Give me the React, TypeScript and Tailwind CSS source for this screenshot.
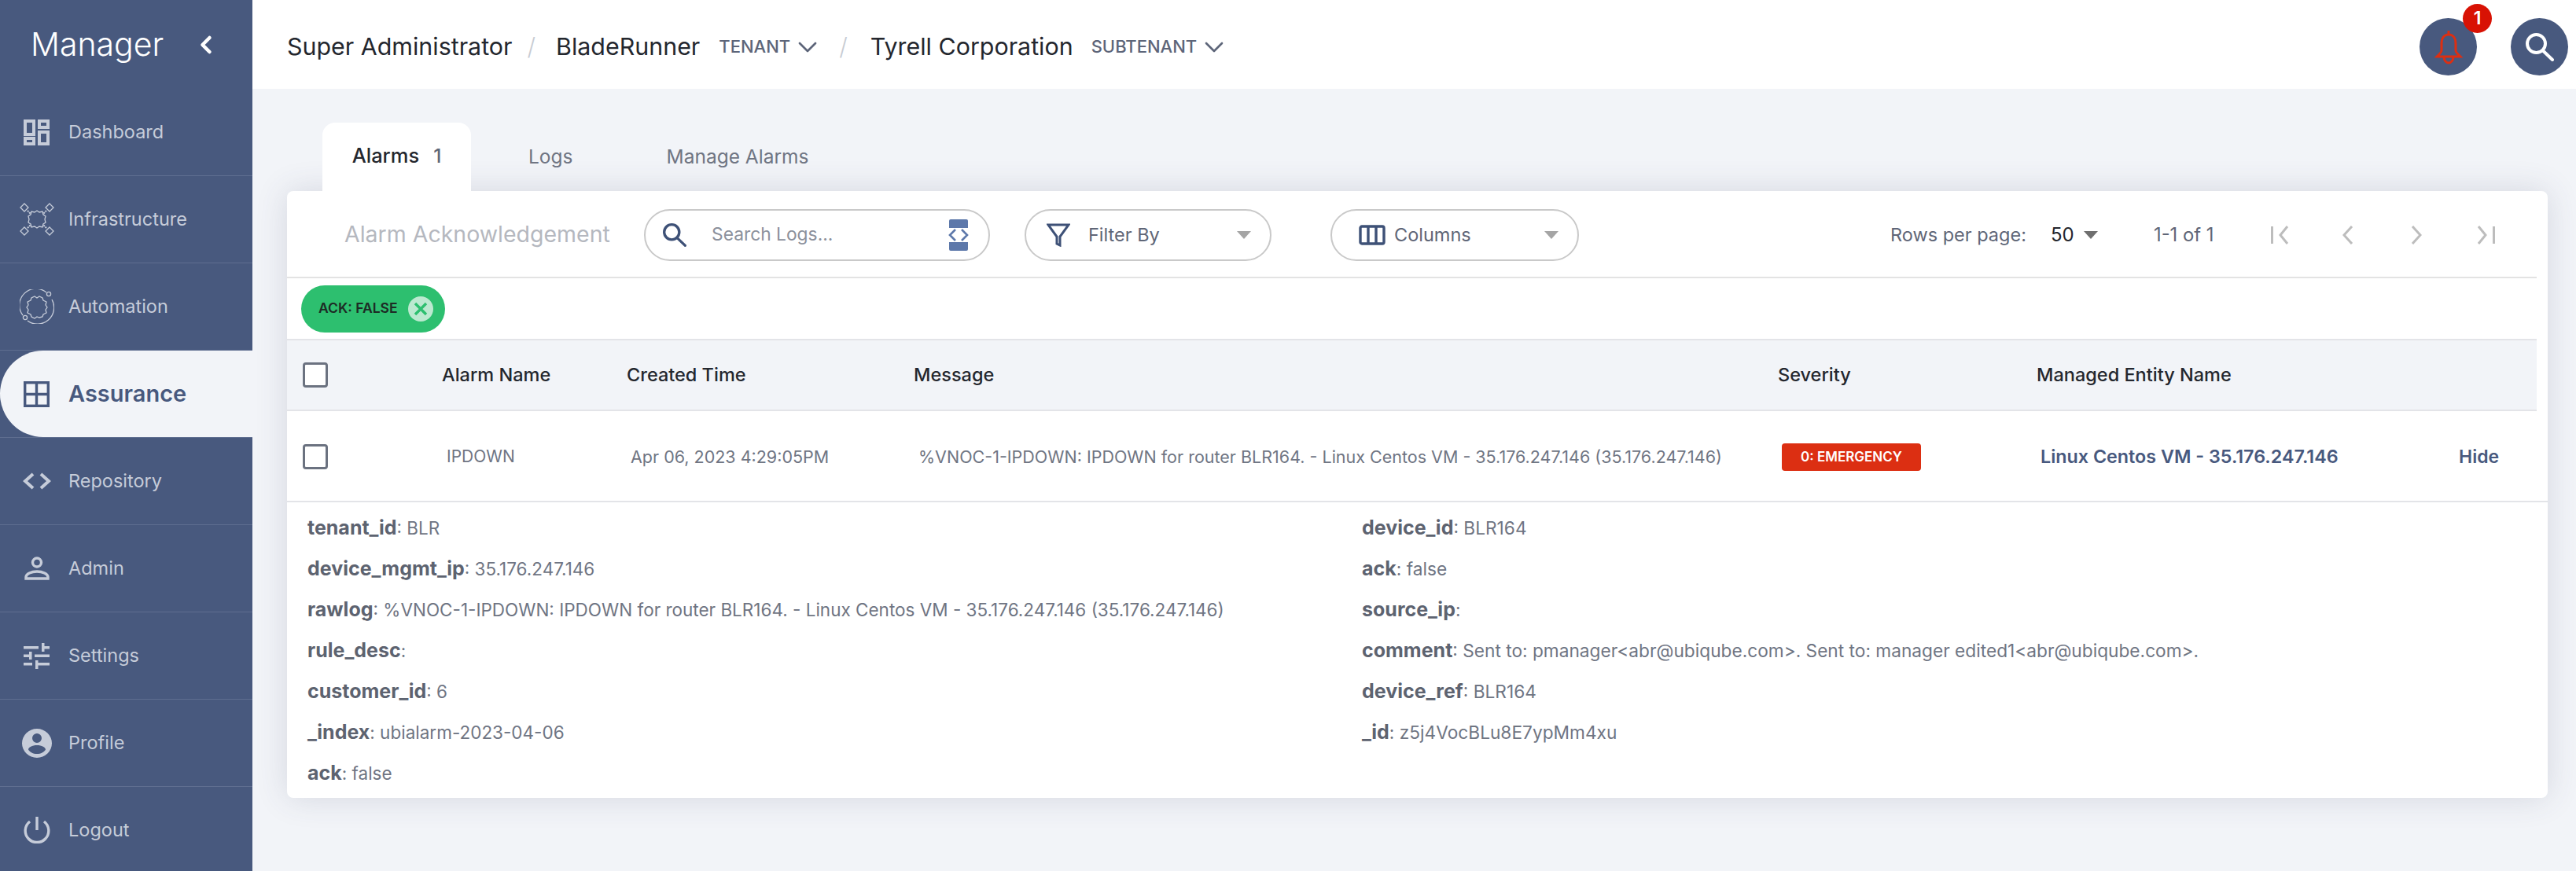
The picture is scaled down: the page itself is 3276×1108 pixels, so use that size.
import React from 'react';
import { ChevronDown, ChevronLeft } from 'lucide-react';

const DashboardIcon = () => (
  <svg className="w-[33px] h-[33px]" viewBox="0 0 33 33" fill="none" stroke="currentColor" strokeWidth="4">
    <rect x="2" y="2" width="11" height="17" />
    <rect x="20" y="2" width="11" height="8" />
    <rect x="2" y="24" width="11" height="7" />
    <rect x="20" y="16" width="11" height="15" />
  </svg>
);

const InfraIcon = () => (
  <svg className="w-[44px] h-[44px]" viewBox="0 0 44 44" fill="none" stroke="currentColor" strokeWidth="1.3">
    <path d="M6 2l5 5-5 5-5-5zM38 2l5 5-5 5-5-5zM6 32l5 5-5 5-5-5zM38 32l5 5-5 5-5-5z" />
    <path d="M10 11l4 4M34 11l-4 4M10 33l4-4M34 33l-4-4" strokeWidth="2" strokeDasharray="2 1" />
    <path d="M19 13l3-2 3 2 4-1 1 4 3 2-1 4 1 4-3 2-1 4-4-1-3 2-3-2-4 1-1-4-3-2 1-4-1-4 3-2 1-4z" />
  </svg>
);

const AutomationIcon = () => (
  <svg className="w-[44px] h-[44px]" viewBox="0 0 44 44" fill="none" stroke="currentColor" strokeWidth="1.3">
    <path d="M34 4A21 21 0 0 0 4 33" />
    <path d="M10 40A21 21 0 0 0 41 13" />
    <circle cx="37" cy="6" r="2.6" />
    <circle cx="7" cy="36" r="2.6" />
    <path d="M19 9l3 2 3-2 4 2 1 3 4 2-1 4 2 3-2 3 1 4-4 2-1 3-4 1-3-1-3 2-4-2-1-3-4-2 1-4-2-3 2-3-1-4 4-2 1-3z" />
  </svg>
);

const AssuranceIcon = () => (
  <svg className="w-[33px] h-[33px]" viewBox="0 0 33 33" fill="none" stroke="currentColor" strokeWidth="3.4">
    <rect x="1.7" y="1.7" width="29.6" height="29.6" />
    <path d="M16.5 2v29M2 16.5h29" />
  </svg>
);

const CodeIcon = () => (
  <svg className="w-[38px] h-[24px]" viewBox="0 0 38 24" fill="none" stroke="currentColor" strokeWidth="4">
    <path d="M14 3L4 12l10 9M24 3l10 9-10 9" />
  </svg>
);

const AdminIcon = () => (
  <svg className="w-[32px] h-[30px]" viewBox="0 0 32 30" fill="none" stroke="currentColor" strokeWidth="3.4">
    <circle cx="16" cy="7.5" r="5.5" />
    <path d="M2 28v-2c0-4 7-7 14-7s14 3 14 7v2z" />
  </svg>
);

const SettingsIcon = () => (
  <svg className="w-[33px] h-[33px]" viewBox="0 0 33 33" fill="currentColor">
    <path d="M0 4h19v3.500H0zM23 0h3.500v4H33v3.500h-6.500V11H23zM0 14.500h7V11h3.500v10H7v-3H0zM14 14.500h19V18H14zM0 25h11v3.500H0zM15 22h3.500v3H33v3.500H18.500V33H15z" />
  </svg>
);

const ProfileIcon = () => (
  <svg className="w-[38px] h-[37px]" viewBox="0 0 38 37" fill="currentColor">
    <path fillRule="evenodd" d="M19 0a19 18.500 0 1 1 0 37a19 18.500 0 0 1 0-37zM19 6a6 6 0 1 0 0 12a6 6 0 0 0 0-12zM19 21c-6 0-11 2.500-11 5.500C10 30 14 32 19 32s9-2 11-5.500C30 23.500 25 21 19 21z" />
  </svg>
);

const LogoutIcon = () => (
  <svg className="w-[34px] h-[34px]" viewBox="0 0 34 34" fill="none" stroke="currentColor" strokeWidth="3.4">
    <path d="M17 0v17" />
    <path d="M8 6a14.800 14.800 0 1 0 18 0" />
  </svg>
);

// lens up-left with a long handle, lucide's Search has too big a lens
const SearchIcon = ({ className, stroke }: { className: string; stroke: string }) => (
  <svg className={className} viewBox="0 0 36 36" fill="none" stroke={stroke} strokeWidth="4" strokeLinecap="round">
    <circle cx="13.500" cy="13.500" r="11.500" />
    <path d="M21.500 22L34 34" />
  </svg>
);

const navItems = [
  { label: 'Dashboard', icon: <DashboardIcon /> },
  { label: 'Infrastructure', icon: <InfraIcon /> },
  { label: 'Automation', icon: <AutomationIcon /> },
  { label: 'Assurance', icon: <AssuranceIcon />, active: true },
  { label: 'Repository', icon: <CodeIcon /> },
  { label: 'Admin', icon: <AdminIcon /> },
  { label: 'Settings', icon: <SettingsIcon /> },
  { label: 'Profile', icon: <ProfileIcon /> },
  { label: 'Logout', icon: <LogoutIcon /> },
];

const leftDetails = [
  ['tenant_id', 'BLR'],
  ['device_mgmt_ip', '35.176.247.146'],
  ['rawlog', '%VNOC-1-IPDOWN: IPDOWN for router BLR164. - Linux Centos VM - 35.176.247.146 (35.176.247.146)'],
  ['rule_desc', ''],
  ['customer_id', '6'],
  ['_index', 'ubialarm-2023-04-06'],
  ['ack', 'false'],
];

const rightDetails = [
  ['device_id', 'BLR164'],
  ['ack', 'false'],
  ['source_ip', ''],
  ['comment', 'Sent to: pmanager<abr@ubiqube.com>. Sent to: manager edited1<abr@ubiqube.com>.'],
  ['device_ref', 'BLR164'],
  ['_id', 'z5j4VocBLu8E7ypMm4xu'],
];

const Sidebar = () => (
  <aside className="w-[321px] shrink-0 bg-[#48597e] h-[1108px] overflow-hidden">
    <div className="h-[113px] flex items-center pl-[39px] text-white">
      <span className="text-[41px] font-light w-[205px]">Manager</span>
      <ChevronLeft className="w-[36px] h-[36px]" strokeWidth={3} />
    </div>
    {navItems.map(item => (
      <div key={item.label} className="h-[111px] border-b border-[#5f6e90]">
        <div className={item.active ? 'h-full flex items-center bg-[#f2f4f8] rounded-l-[55px] text-[#48597e] font-semibold text-[29px]' : 'h-full flex items-center text-[#c6ccd9] text-[23.5px]'}>
          <div className="w-[87px] pl-[6px] flex justify-center shrink-0">{item.icon}</div>
          <span>{item.label}</span>
        </div>
      </div>
    ))}
  </aside>
);

const Header = () => (
  <header className="h-[113px] bg-white flex items-center pt-[6px] pl-[44px] pr-[10px] text-[30.400px] text-[#24272e]">
    <span>Super Administrator</span>
    <span className="ml-[19px] text-[#c8ccd3] font-light">/</span>
    <span className="ml-[26px]">BladeRunner</span>
    <span className="ml-[24px] text-[22px] font-medium text-[#5d6579]">TENANT</span>
    <ChevronDown className="ml-[2px] w-[40px] h-[40px] text-[#5d6579]" strokeWidth={1.600} />
    <span className="ml-[20px] text-[#c8ccd3] font-light">/</span>
    <span className="ml-[29px]">Tyrell Corporation</span>
    <span className="ml-[23px] text-[22px] font-medium text-[#5d6579]">SUBTENANT</span>
    <ChevronDown className="ml-[2px] w-[40px] h-[40px] text-[#5d6579]" strokeWidth={1.600} />
    <div className="ml-auto relative w-[73px] h-[73px] rounded-full bg-[#48597e] flex items-center justify-center">
      <svg className="w-[36px] h-[44px]" viewBox="0 0 36 44" fill="none" stroke="#dc2f12" strokeWidth="3">
        <path d="M18 1v5M18 6c-6 0-9 5-9 11v9c0 3-3 5-6 8h30c-3-3-6-5-6-8v-9c0-6-3-11-9-11zM12 34c0 5 3 8 6 8s6-3 6-8" />
      </svg>
      <span className="absolute -top-[18px] -right-[19px] w-[37px] h-[37px] rounded-full bg-[#d81204] text-white text-[23px] font-semibold flex items-center justify-center">1</span>
    </div>
    <div className="ml-[43px] w-[73px] h-[73px] rounded-full bg-[#48597e] flex items-center justify-center">
      <SearchIcon className="w-[36px] h-[36px]" stroke="white" />
    </div>
  </header>
);

const SelectBox = ({ width, icon, label }: { width: string; icon: React.ReactNode; label: string }) => (
  <div className={`${width} h-[66px] rounded-[33px] border-2 border-[#c9c9c9] flex items-center pl-[26px] pr-[24px] text-[23.500px] text-[#5f6677]`}>
    {icon}
    <span className="ml-[23px]">{label}</span>
    <span className="ml-auto w-0 h-0 border-l-[9px] border-r-[9px] border-t-[10px] border-l-transparent border-r-transparent border-t-[#a5a5a5]" />
  </div>
);

const Toolbar = () => (
  <div className="h-[111px] pt-[2px] mr-[14px] border-b-2 border-[#e3e3e3] flex items-center pl-[73px]">
    <span className="w-[338px] text-[28.500px] text-[#b5b8bf] whitespace-nowrap">Alarm Acknowledgement</span>
    <div className="ml-[43px] w-[440px] h-[66px] rounded-[33px] border-2 border-[#c9c9c9] flex items-center pl-[22px] pr-[24px]">
      <SearchIcon className="w-[30px] h-[30px]" stroke="#3e5177" />
      <span className="ml-[32px] text-[22.800px] text-[#8c919c]">Search Logs...</span>
      <svg className="ml-auto w-[28px] h-[42px]" viewBox="0 0 28 42" fill="none">
        <path d="M2 12V3a2 2 0 0 1 2-2h20a2 2 0 0 1 2 2v9zM2 30v9a2 2 0 0 0 2 2h20a2 2 0 0 0 2-2v-9z" fill="#5d78aa" />
        <path d="M10 14l-7 7 7 7M18 14l7 7-7 7" stroke="#5d78aa" strokeWidth="2.6" />
      </svg>
    </div>
    <div className="ml-[44px]">
      <SelectBox
        width="w-[314px]"
        label="Filter By"
        icon={
          <svg className="w-[30px] h-[30px]" viewBox="0 0 30 30" fill="none" stroke="#3e5177" strokeWidth="3">
            <path d="M2 2h26L17 17v11l-4-2V17z" />
          </svg>
        }
      />
    </div>
    <div className="ml-[75px]">
      <SelectBox
        width="w-[316px]"
        label="Columns"
        icon={
          <svg className="ml-[8px] w-[34px] h-[26px] -mr-[12px]" viewBox="0 0 34 26" fill="none" stroke="#3e5177" strokeWidth="3.4">
            <rect x="2" y="2" width="30" height="22" rx="2" />
            <path d="M12 2v22M22 2v22" />
          </svg>
        }
      />
    </div>
    <span className="ml-[396px] w-[173px] text-[23.500px] text-[#5f6677] whitespace-nowrap">Rows per page:</span>
    <span className="ml-[31px] w-[29px] text-[24px] text-[#24272e]">50</span>
    <span className="ml-[13px] w-0 h-0 border-l-[9px] border-r-[9px] border-t-[10px] border-l-transparent border-r-transparent border-t-[#6f6f6f]" />
    <span className="ml-[71px] w-[80px] text-[23.800px] text-[#5f6677] whitespace-nowrap">1-1 of 1</span>
    <div className="ml-[69px] flex items-center">
      <svg className="w-[23px] h-[24px]" viewBox="0 0 23 24" fill="none" stroke="#bdbdbd" strokeWidth="3"><path d="M1.500 1v22M21 1l-9 11 9 11" /></svg>
      <svg className="ml-[68px] w-[14px] h-[24px]" viewBox="0 0 14 24" fill="none" stroke="#bdbdbd" strokeWidth="3"><path d="M12 1L2 12l10 11" /></svg>
      <svg className="ml-[73px] w-[14px] h-[24px]" viewBox="0 0 14 24" fill="none" stroke="#bdbdbd" strokeWidth="3"><path d="M2 1l10 11L2 23" /></svg>
      <svg className="ml-[70px] w-[23px] h-[24px]" viewBox="0 0 23 24" fill="none" stroke="#bdbdbd" strokeWidth="3"><path d="M21.500 1v22M2 1l9 11-9 11" /></svg>
    </div>
  </div>
);

const Checkbox = () => <div className="w-[32px] h-[32px] rounded-[4px] border-[3px] border-[#6b7280] bg-white" />;

const DetailRow = ({ name, value }: { name: string; value: string }) => (
  <div className="h-[52px] flex items-center whitespace-pre">
    <span className="font-bold text-[25px] text-[#5d6370]">{name}</span>
    <span>: {value}</span>
  </div>
);

const App = () => (
  <div className="flex w-[3276px] h-[1108px] overflow-hidden bg-[#f2f4f8] font-['Inter',sans-serif]">
    <Sidebar />
    <div className="flex-1 min-w-0">
      <Header />
      <main className="pl-[44px] pr-[36px] pt-[43px]">
        <div className="flex h-[87px] ml-[45px] text-[24.500px] text-[#6f7583]">
          <div className="w-[189px] bg-white rounded-t-[16px] flex items-center justify-center pb-[2px] text-[#24272e] font-medium">
            <span className="text-[25.500px]">Alarms</span><span className="ml-[18px] text-[#5f6677]">1</span>
          </div>
          <div className="ml-[73px] flex items-center">Logs</div>
          <div className="ml-[119px] flex items-center">Manage Alarms</div>
        </div>
        <section className="bg-white rounded-[8px] shadow-[0_0_40px_rgba(60,70,100,0.16)] h-[772px]">
          <Toolbar />
          <div className="h-[77px] mr-[14px] pl-[18px] flex items-center">
            <div className="w-[183px] h-[60px] rounded-[30px] bg-[#2dbf6f] flex items-center pl-[22px] text-[17.500px] font-semibold text-[#1d2b25] whitespace-nowrap">
              ACK: FALSE
              <span className="ml-[13px] w-[32px] h-[32px] shrink-0 rounded-full bg-[#bce9d0] flex items-center justify-center">
                <svg className="w-[20px] h-[20px]" viewBox="0 0 20 20" stroke="#2dbf6f" strokeWidth="3.4"><path d="M3 3l14 14M17 3L3 17" /></svg>
              </span>
            </div>
          </div>
          <div className="h-[92px] mr-[14px] bg-[#f2f4f8] border-y-2 border-[#e3e4e8] flex items-center pl-[20px] text-[23.500px] font-medium text-[#24272e]">
            <div className="w-[177px]"><Checkbox /></div>
            <div className="w-[235px]">Alarm Name</div>
            <div className="w-[365px]">Created Time</div>
            <div className="w-[1099px]">Message</div>
            <div className="w-[329px]">Severity</div>
            <div className="whitespace-nowrap">Managed Entity Name</div>
          </div>
          <div className="h-[116px] pt-[2px] border-b-2 border-[#e3e4e8] flex items-center pl-[20px] text-[21.500px] text-[#6f7583]">
            <div className="w-[183px]"><Checkbox /></div>
            <div className="w-[234px] text-[21px]">IPDOWN</div>
            <div className="w-[366px]">Apr 06, 2023 4:29:05PM</div>
            <div className="w-[1098px] whitespace-nowrap">%VNOC-1-IPDOWN: IPDOWN for router BLR164. - Linux Centos VM - 35.176.247.146 (35.176.247.146)</div>
            <div className="w-[329px]">
              <span className="inline-flex w-[177px] h-[35px] items-center justify-center rounded-[4px] bg-[#dc2f12] text-white text-[17px] font-semibold">0: EMERGENCY</span>
            </div>
            <div className="w-[532px] font-semibold text-[23.300px] text-[#48597e] whitespace-nowrap">Linux Centos VM - 35.176.247.146</div>
            <div className="font-semibold text-[23px] text-[#48597e]">Hide</div>
          </div>
          <div className="flex pl-[26px] pt-[7px] text-[#6f7583]">
            <div className="w-[1341px] text-[22.500px]">
              {leftDetails.map(([name, value], i) => <DetailRow key={i} name={name} value={value} />)}
            </div>
            <div className="text-[22.700px]">
              {rightDetails.map(([name, value], i) => <DetailRow key={i} name={name} value={value} />)}
            </div>
          </div>
        </section>
      </main>
    </div>
  </div>
);

export default App;
